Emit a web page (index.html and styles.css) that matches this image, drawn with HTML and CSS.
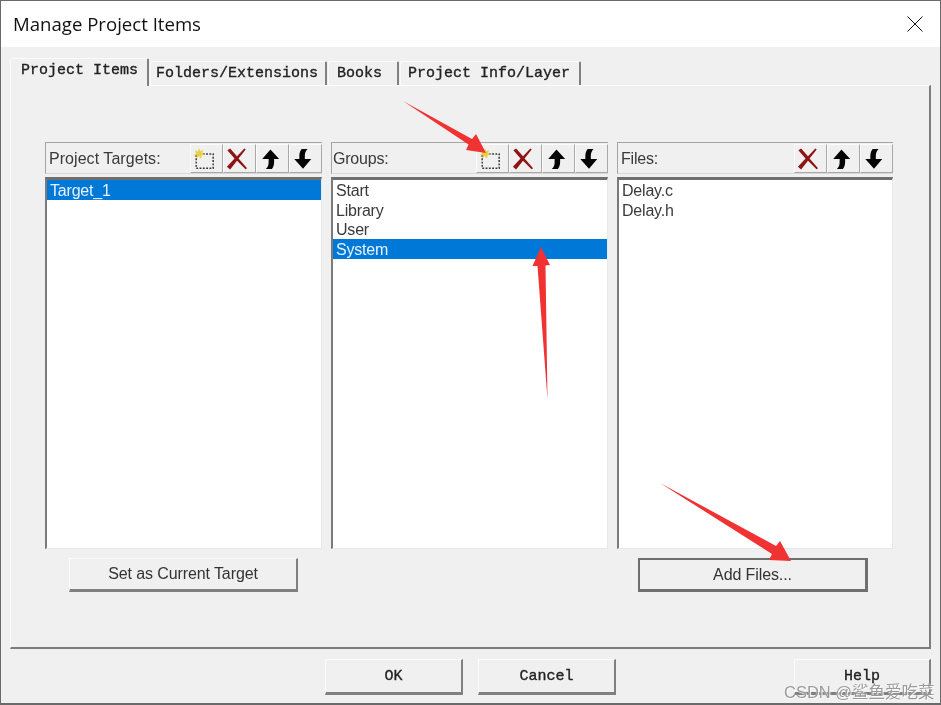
FILE: index.html
```html
<!DOCTYPE html>
<html lang="en">
<head>
<meta charset="utf-8">
<title>Manage Project Items</title>
<link rel="stylesheet" href="styles.css">
</head>
<body>
<svg width="0" height="0" class="defs">
  <symbol id="i-new" viewBox="0 0 24 24">
    <rect x="3.500" y="6.500" width="18.500" height="15.500" fill="none" stroke="#333" stroke-width="1.600" stroke-dasharray="2 1.600"/>
    <path d="M6.500 0l1.300 3.500 3.700-1.500-1.900 3.500 3.400 1.300-3.700 1-.4 3.900-2.600-2.600-3 2.400.7-3.700L0 7.600l3.600-1.300L2 2.500l3.400 1.300z" fill="#e6d24a"/>
  </symbol>
  <symbol id="i-del" viewBox="0 0 24 24">
    <path d="M1.500 2.500L4.500 .5 12 9 20 .5l1.500 1.200-7.800 9.800L23 22l-1.700 1.200-9.300-9.200L4.500 23.500 1 20.500l8.300-9z" fill="#8e1414"/>
  </symbol>
  <symbol id="i-up" viewBox="0 0 24 24">
    <path d="M12.500 1.500L22 12h-5.500v3.500c0 3-1 5.500-2.500 7.500H7.500c2.200-2.200 3-4.500 3-7.500V12H3.500z" fill="#050505"/>
  </symbol>
  <symbol id="i-down" viewBox="0 0 24 24">
    <path d="M12 22.500L2.500 12H8V8.500c0-3 1-5.500 2.500-7.500H17c-2.200 2.200-3 4.500-3 7.500V12h7z" fill="#050505"/>
  </symbol>
</svg>
<div class="window">
  <header class="titlebar">
    <span class="title">Manage Project Items</span>
    <svg class="close" width="16" height="16" viewBox="0 0 16 16"><path d="M0.500 0.500L15.500 15.500M15.500 0.500L0.500 15.500" stroke="#111" stroke-width="1" fill="none"/></svg>
  </header>
  <div class="client">
    <nav class="tabs">
      <span class="tab tab-active">Project Items</span>
      <span class="tab tab-folders">Folders/Extensions</span>
      <span class="tab tab-books">Books</span>
      <span class="tab tab-info">Project Info/Layer</span>
    </nav>
    <section class="panel">
      <div class="columns">
        <div class="column">
          <div class="head">
            <span class="head-label label-targets">Project Targets:</span>
            <button class="tool"><svg class="ico"><use href="#i-new"/></svg></button>
            <button class="tool"><svg class="ico"><use href="#i-del"/></svg></button>
            <button class="tool"><svg class="ico"><use href="#i-up"/></svg></button>
            <button class="tool"><svg class="ico"><use href="#i-down"/></svg></button>
          </div>
          <ul class="list">
            <li class="item selected">Target_1</li>
          </ul>
          <button class="action action-target">Set as Current Target</button>
        </div>
        <div class="column">
          <div class="head">
            <span class="head-label label-groups">Groups:</span>
            <button class="tool"><svg class="ico"><use href="#i-new"/></svg></button>
            <button class="tool"><svg class="ico"><use href="#i-del"/></svg></button>
            <button class="tool"><svg class="ico"><use href="#i-up"/></svg></button>
            <button class="tool"><svg class="ico"><use href="#i-down"/></svg></button>
          </div>
          <ul class="list">
            <li class="item">Start</li>
            <li class="item">Library</li>
            <li class="item">User</li>
            <li class="item selected">System</li>
          </ul>
        </div>
        <div class="column">
          <div class="head">
            <span class="head-label">Files:</span>
            <button class="tool"><svg class="ico"><use href="#i-del"/></svg></button>
            <button class="tool"><svg class="ico"><use href="#i-up"/></svg></button>
            <button class="tool"><svg class="ico"><use href="#i-down"/></svg></button>
          </div>
          <ul class="list">
            <li class="item">Delay.c</li>
            <li class="item">Delay.h</li>
          </ul>
          <button class="action action-add">Add Files...</button>
        </div>
      </div>
    </section>
    <footer class="footer">
      <button class="dialog-btn">OK</button>
      <button class="dialog-btn btn-cancel">Cancel</button>
      <button class="dialog-btn btn-help">Help</button>
    </footer>
  </div>
  <svg class="annotations" width="941" height="705" viewBox="0 0 941 705">
    <polygon points="403,101 472,139 476,134 486,153 466,150 468.500,144.500" fill="#f03232"/>
    <polygon points="547.500,399.500 537.500,266 532.500,266 541,247 550,265 545.500,265.500" fill="#f03232"/>
    <polygon points="660,483 776,546 780,541 791,561 769,560 772,554" fill="#f03232"/>
  </svg>
  <span class="watermark">CSDN @鲨鱼爱吃菜</span>
</div>
</body>
</html>
```
FILE: styles.css
```css
* { box-sizing: border-box; }
html, body { margin: 0; padding: 0; }
body { width: 941px; height: 705px; overflow: hidden; background: #f0f0f0; font-family: "Liberation Sans", Arial, sans-serif; }
.defs { position: absolute; }
.window { position: relative; width: 941px; height: 705px; border: 1px solid #6a6a6a; border-width: 1px 1px 2px 1px; background: #f0f0f0; display: flex; flex-direction: column; filter: blur(0.3px); }
.titlebar { height: 46px; flex: none; background: #fff; display: flex; align-items: center; justify-content: space-between; padding: 0 17px 0 12px; }
.title { font-family: "Open Sans", "Noto Sans", sans-serif; font-size: 18.600px; color: #111; padding-bottom: 2px; }
.close { display: block; }
.client { flex: 1; padding: 10px 0 0 9px; }
.tabs { display: flex; align-items: flex-end; height: 28px; font-family: "Liberation Mono", monospace; font-size: 15px; color: #222; }
.tab { display: flex; align-items: center; height: 24px; padding-left: 6px; margin-right: 1px; background: #f0f0f0; border-top: 1px solid #fafafa; border-left: 1px solid #fafafa; border-right: 2px solid #808080; border-top-left-radius: 2px; border-top-right-radius: 2px; white-space: nowrap; -webkit-text-stroke: 0.35px #222; }
.tab-active { height: 28px; width: 139px; padding: 0 0 4px 10px; margin-right: 0; position: relative; z-index: 1; margin-bottom: -1px; }
.tab-folders { width: 177px; margin-left: 1px; padding-left: 5px; }
.tab-books { width: 71px; padding-left: 8px; }
.tab-info { width: 181px; padding-left: 7px; margin-right: 0; }
.panel { width: 921px; height: 564px; padding: 56px 0 0 34px; border-top: 1px solid #fbfbfb; border-left: 1px solid #fbfbfb; border-right: 2px solid #7d7d7d; border-bottom: 2px solid #7d7d7d; }
.columns { display: grid; grid-template-columns: 277px 277px 276px; column-gap: 9px; }
.column { display: flex; flex-direction: column; align-items: flex-start; }
.head { width: 100%; height: 32px; display: flex; align-items: flex-end; border-top: 1px solid #a4a4a4; border-left: 1px solid #a4a4a4; border-bottom: 1px solid #d8d8d8; }
.head-label { flex: 1; align-self: center; padding-left: 3px; font-size: 16px; letter-spacing: -0.2px; color: #3a3a3a; padding-top: 2px; }
.label-targets { letter-spacing: 0.05px; }
.label-groups { padding-left: 1px; }
.tool { width: 33px; height: 29px; margin: 0; padding: 0 5px 0 0; background: #f0f0f0; display: flex; align-items: center; justify-content: center; border: 0; border-left: 1px solid #fbfbfb; border-right: 1px solid #a8a8a8; border-bottom: 1px solid #a8a8a8; border-top: 1px solid #fbfbfb; }
.ico { width: 22px; height: 22px; display: block; }
.list { width: 100%; height: 372px; margin: 3px 0 0; padding: 0; list-style: none; background: #fff; border-top: 3px solid #6f6f6f; border-left: 2px solid #7a7a7a; border-right: 1px solid #e8e8e8; border-bottom: 1px solid #e8e8e8; }
.item { height: 19.700px; line-height: 21px; padding-left: 3px; font-size: 16px; letter-spacing: -0.2px; color: #3a3a3a; }
.selected { background: #0078d7; color: #e8f2fb; }
.action { height: 34px; margin: 9px 0 0; padding: 0; background: #f0f0f0; font-family: "Liberation Sans", Arial, sans-serif; font-size: 16px; letter-spacing: -0.1px; color: #333; border: 0; border-top: 1px solid #fbfbfb; border-left: 1px solid #fbfbfb; border-right: 2px solid #808080; border-bottom: 3px solid #808080; }
.action-target { width: 229px; margin-left: 24px; }
.action-add { width: 230px; margin-left: 21px; border: 2px solid #6f6f6f; border-right-width: 3px; border-bottom-width: 3px; }
.footer { display: flex; padding-left: 315px; margin-top: 10px; }
.dialog-btn { width: 138px; height: 36px; padding: 0; background: #f0f0f0; font-family: "Liberation Mono", monospace; font-size: 15px; color: #222; -webkit-text-stroke: 0.35px #222; border: 0; border-top: 1px solid #fbfbfb; border-left: 1px solid #fbfbfb; border-right: 2px solid #808080; border-bottom: 3px solid #808080; }
.btn-cancel { margin-left: 15px; }
.btn-help { margin-left: 178px; width: 137px; }
.annotations { position: absolute; left: -1px; top: -1px; pointer-events: none; }
.watermark { position: absolute; left: 783px; top: 678px; font-family: "Liberation Sans", "Noto Sans CJK SC", sans-serif; font-size: 16.500px; color: rgba(120, 120, 120, 0.75); text-shadow: 0 0 1px #fff, 1px 1px 1px #fff; white-space: nowrap; }
```
